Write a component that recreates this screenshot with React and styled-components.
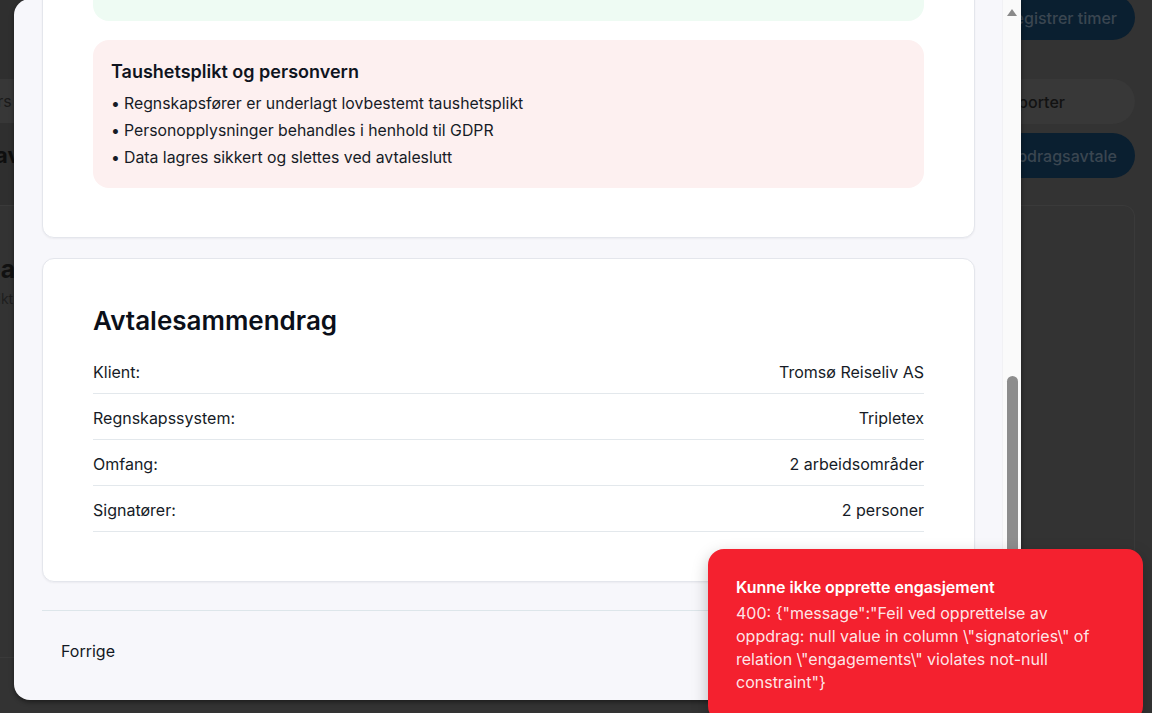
import React from 'react';
import styled, { createGlobalStyle } from 'styled-components';

const GlobalStyle = createGlobalStyle`
  *, *::before, *::after { box-sizing: border-box; }
  html, body { margin: 0; padding: 0; }
  body {
    font-family: Inter, "Noto Sans", "Liberation Sans", sans-serif;
    background: #333333;
    overflow: hidden;
  }
`;

const Screen = styled.div`
  position: relative;
  width: 1152px;
  height: 713px;
  overflow: hidden;
  background: #333333;
`;

/* ---------- dimmed application behind the dialog ---------- */

const Backdrop = styled.div`
  display: flex;
  flex-direction: column;
  height: 100%;
  padding: 0 17px 55px 0;
`;

const TopArea = styled.div`
  display: flex;
  justify-content: space-between;
  height: 205px;
  flex-shrink: 0;
`;

const LeftStack = styled.div`
  display: flex;
  flex-direction: column;
  width: 60px;
  padding-top: 79px;
  background: #2f2f2f;
`;

const Clip = styled.div`
  display: flex;
  justify-content: flex-end;
  align-items: center;
  width: ${p => p.$w}px;
  height: ${p => p.$h}px;
  margin-top: ${p => p.$mt || 0}px;
  white-space: nowrap;
  font-size: ${p => p.$size}px;
  font-weight: ${p => p.$weight || 400};
  color: ${p => p.$color || '#141414'};
  background: ${p => p.$bg || 'transparent'};
`;

const ActionStack = styled.div`
  display: flex;
  flex-direction: column;
  align-items: flex-end;
  margin-top: -5px;
`;

const Pill = styled.div`
  display: flex;
  align-items: center;
  height: 45px;
  margin-top: ${p => p.$mt || 0}px;
  padding: 0 ${p => p.$pr}px 0 22px;
  border-radius: 23px;
  font-size: 16px;
  font-weight: 500;
  white-space: nowrap;
  background: ${p => (p.$navy ? '#0a1f30' : '#383838')};
  color: ${p => (p.$navy ? '#3a4651' : '#121212')};
`;

const BackCard = styled.div`
  flex: 1;
  display: flex;
  flex-direction: column;
  padding-top: 48px;
  border: 1px solid #3a3a3a;
  border-left: none;
  border-radius: 0 12px 12px 0;
`;

/* ---------- dialog ---------- */

const Modal = styled.div`
  position: absolute;
  left: 14px;
  top: -1px;
  width: 1007px;
  height: 701px;
  display: flex;
  background: #f7f7fb;
  border-radius: 16px 0 16px 16px;
  overflow: hidden;
  box-shadow: 0 2px 5px rgba(0, 0, 0, 0.45);
`;

const Body = styled.div`
  flex: 1;
  min-width: 0;
  display: flex;
  flex-direction: column;
  justify-content: flex-end;
  padding: 0 27px 29px 28px;
  overflow: hidden;
`;

const Card = styled.section`
  flex-shrink: 0;
  background: #ffffff;
  border: 1px solid #e4e6ec;
  border-radius: 12px;
  box-shadow: 0 1px 2px rgba(16, 24, 40, 0.05);
  padding: ${p => p.$pad};
  margin-top: ${p => p.$mt || 0}px;
  display: flex;
  flex-direction: column;
`;

const InfoBox = styled.div`
  border-radius: 16px;
  padding: 20px 18px 17px;
  margin-top: ${p => p.$mt || 0}px;
  background: ${p => (p.$tone === 'green' ? '#eefbf3' : '#fdf0f0')};
  color: #121722;
`;

const InfoTitle = styled.h3`
  margin: 0 0 6px;
  font-size: 18px;
  line-height: 24px;
  font-weight: 600;
  color: #0f141e;
`;

const BulletList = styled.ul`
  margin: 0;
  padding: 0;
  list-style: none;
`;

const Bullet = styled.li`
  font-size: 15.8px;
  line-height: 27px;
  color: #161b26;
  &::before {
    content: '•';
    display: inline-block;
    width: 13px;
    padding-left: 0;
  }
`;

const SummaryTitle = styled.h2`
  margin: 0 0 10px;
  font-size: 26px;
  line-height: 34px;
  font-weight: 600;
  color: #0b0f19;
`;

const Row = styled.div`
  display: flex;
  justify-content: space-between;
  padding: 13px 0 10px;
  border-bottom: 1px solid #e3e8ec;
  font-size: 16px;
  line-height: 22px;
  color: #161b26;
`;

const Footer = styled.footer`
  flex-shrink: 0;
  margin-top: 28px;
  padding-top: 20px;
  border-top: 1px solid #dde6ea;
  display: flex;
  justify-content: space-between;
`;

const GhostButton = styled.button`
  height: 40px;
  padding: 0 19px;
  border: none;
  border-radius: 999px;
  background: transparent;
  font-family: Inter, "Noto Sans", sans-serif;
  font-size: 16px;
  font-weight: 400;
  color: #131924;
`;

const Track = styled.div`
  width: 19px;
  flex-shrink: 0;
  display: flex;
  flex-direction: column;
  align-items: center;
  padding: 9px 0 8px;
  background: #fafafa;
  border-left: 1px solid #f1f1f4;
`;

const Thumb = styled.div`
  width: 11px;
  border-radius: 6px;
  background: #8d8d8d;
  margin-top: ${p => p.$top}px;
  height: ${p => p.$len}px;
`;

const Arrow = ({ down }) => (
  <svg width="12" height="9" viewBox="0 0 12 9" style={{ marginTop: down ? 'auto' : 0 }}>
    <polygon points={down ? '1,1 11,1 6,8' : '6,1 11,8 1,8'} fill="#8a8a8a" />
  </svg>
);

/* ---------- toast ---------- */

const Toast = styled.div`
  position: absolute;
  left: 708px;
  top: 549px;
  width: 435px;
  padding: 27px 28px 28px;
  border-radius: 16px;
  background: #f4212f;
  color: #ffffff;
  box-shadow: 0 6px 16px rgba(0, 0, 0, 0.25);
`;

const ToastTitle = styled.div`
  font-size: 16px;
  line-height: 22px;
  font-weight: 600;
`;

const ToastMessage = styled.div`
  margin-top: 4px;
  max-width: 360px;
  font-size: 16px;
  line-height: 23px;
  color: rgba(255, 255, 255, 0.9);
`;

const summary = [
  ['Klient:', 'Tromsø Reiseliv AS'],
  ['Regnskapssystem:', 'Tripletex'],
  ['Omfang:', '2 arbeidsområder'],
  ['Signatører:', '2 personer'],
];

export default function App() {
  return (
    <>
      <GlobalStyle />
      <Screen>
        <Backdrop>
          <TopArea>
            <LeftStack>
              <Clip $w={80} $h={44} $size={16} $bg="#373737" $color="#1a1a1a">Alle kunders oppdrag</Clip>
              <Clip $w={70} $h={30} $mt={17} $size={22} $weight={700} $color="#0e0e0e">Oppdragsavtaler</Clip>
            </LeftStack>
            <ActionStack>
              <Pill $navy $pr={18}>Registrer timer</Pill>
              <Pill $mt={39} $pr={70}>Eksporter</Pill>
              <Pill $navy $mt={9} $pr={18}>Ny oppdragsavtale</Pill>
            </ActionStack>
          </TopArea>
          <BackCard>
            <Clip $w={86} $h={30} $size={25} $weight={700} $color="#111111">Kundeavtaler</Clip>
            <Clip $w={176} $h={20} $mt={4} $size={14} $color="#1e1e1e">Oversikt over alle aktive oppdrag</Clip>
          </BackCard>
        </Backdrop>

        <Modal>
          <Body>
            <Card $pad="24px 50px 49px">
              <InfoBox $tone="green">
                <InfoTitle>Klientens ansvar</InfoTitle>
                <BulletList>
                  <Bullet>Klienten skal levere fullstendig og korrekt materiale</Bullet>
                  <Bullet>Klienten har ansvar for at bilag leveres i tide til oppdragsansvarlig</Bullet>
                </BulletList>
              </InfoBox>
              <InfoBox $tone="red" $mt={19}>
                <InfoTitle>Taushetsplikt og personvern</InfoTitle>
                <BulletList>
                  <Bullet>Regnskapsfører er underlagt lovbestemt taushetsplikt</Bullet>
                  <Bullet>Personopplysninger behandles i henhold til GDPR</Bullet>
                  <Bullet>Data lagres sikkert og slettes ved avtaleslutt</Bullet>
                </BulletList>
              </InfoBox>
            </Card>

            <Card $pad="45px 50px 49px" $mt={20}>
              <SummaryTitle>Avtalesammendrag</SummaryTitle>
              {summary.map(([label, value]) => (
                <Row key={label}>
                  <span>{label}</span>
                  <span>{value}</span>
                </Row>
              ))}
            </Card>

            <Footer>
              <GhostButton>Forrige</GhostButton>
            </Footer>
          </Body>
          <Track>
            <Arrow />
            <Thumb $top={359} $len={305} />
            <Arrow down />
          </Track>
        </Modal>

        <Toast>
          <ToastTitle>Kunne ikke opprette engasjement</ToastTitle>
          <ToastMessage>
            {'400: {"message":"Feil ved opprettelse av oppdrag: null value in column \\"signatories\\" of relation \\"engagements\\" violates not-null constraint"}'}
          </ToastMessage>
        </Toast>
      </Screen>
    </>
  );
}
